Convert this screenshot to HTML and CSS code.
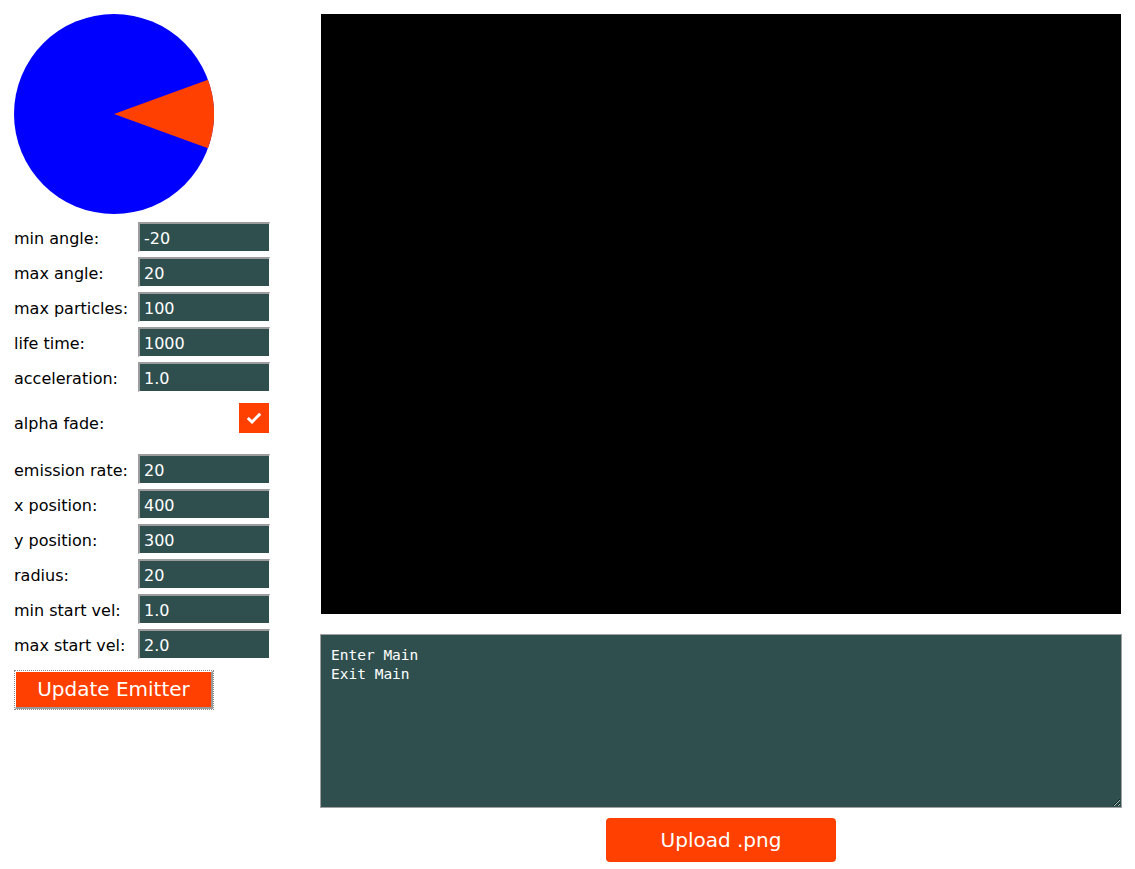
FILE: index.html
```html
<!DOCTYPE html>
<html>
<head>
<meta charset="utf-8">
<title>Particle Emitter</title>
<link rel="stylesheet" href="styles.css">
</head>
<body>
<div class="page">
  <div class="sidebar">
    <svg class="pie" width="200" height="200" viewBox="0 0 200 200">
      <circle cx="100" cy="100" r="100" fill="#0000ff"/>
      <path d="M100 100 L193.97 65.80 A100 100 0 0 1 193.97 134.20 Z" fill="#ff4000"/>
    </svg>
    <form class="form">
      <label class="lbl">min angle:</label><input class="field" type="text" value="-20">
      <label class="lbl">max angle:</label><input class="field" type="text" value="20">
      <label class="lbl">max particles:</label><input class="field" type="text" value="100">
      <label class="lbl">life time:</label><input class="field" type="text" value="1000">
      <label class="lbl">acceleration:</label><input class="field" type="text" value="1.0">
      <div class="check-row">
        <label class="lbl lbl-check">alpha fade:</label>
        <span class="checkbox">
          <svg width="16" height="12" viewBox="0 0 16 12"><polyline points="1.8,6 6,10 14.2,1.8" fill="none" stroke="#fff" stroke-width="3"/></svg>
        </span>
      </div>
      <label class="lbl">emission rate:</label><input class="field" type="text" value="20">
      <label class="lbl">x position:</label><input class="field" type="text" value="400">
      <label class="lbl">y position:</label><input class="field" type="text" value="300">
      <label class="lbl">radius:</label><input class="field" type="text" value="20">
      <label class="lbl">min start vel:</label><input class="field" type="text" value="1.0">
      <label class="lbl">max start vel:</label><input class="field" type="text" value="2.0">
    </form>
    <button class="update-btn" type="button">Update Emitter</button>
  </div>
  <div class="main">
    <div class="viewport"></div>
    <textarea class="console">Enter Main
Exit Main</textarea>
    <button class="upload-btn" type="button">Upload .png</button>
  </div>
</div>
</body>
</html>
```
FILE: styles.css
```css
html, body {
  margin: 0;
  padding: 0;
  background: #fff;
}
body {
  font-family: "DejaVu Sans", Verdana, sans-serif;
  font-size: 16px;
  color: #000;
}
.page {
  display: flex;
  padding: 14px 0 0 14px;
}
.sidebar {
  width: 256px;
  display: flex;
  flex-direction: column;
  align-items: flex-start;
}
.pie {
  display: block;
}
.form {
  margin-top: 8px;
  display: grid;
  grid-template-columns: 124px 132px;
  row-gap: 5px;
  align-items: center;
}
.lbl {
  font-size: 16px;
  line-height: 19px;
  white-space: nowrap;
  padding-top: 2px;
}
.field {
  box-sizing: border-box;
  width: 132px;
  height: 30px;
  margin: 0;
  padding: 1px 4px 0 4px;
  border-style: solid;
  border-width: 2px 1px 1px 2px;
  border-color: #9c9c9c #ffffff #ffffff #9c9c9c;
  background: #2f4f4f;
  color: #fff;
  font-family: "DejaVu Sans", Verdana, sans-serif;
  font-size: 16px;
  outline: none;
}
.check-row {
  grid-column: 1 / 3;
  display: flex;
  justify-content: space-between;
  align-items: flex-start;
  height: 30px;
  margin: 6px 0 16px 0;
  padding-right: 1px;
}
.lbl-check {
  padding-top: 11px;
}
.checkbox {
  width: 30px;
  height: 30px;
  background: #ff4000;
  display: flex;
  align-items: center;
  justify-content: center;
}
.checkbox svg {
  display: block;
}
.update-btn {
  margin: 12px 0 0 1px;
  box-sizing: border-box;
  width: 198px;
  height: 38px;
  padding: 0 0 1px 0;
  background: #ff4000;
  color: #fff;
  font-family: "DejaVu Sans", Verdana, sans-serif;
  font-size: 20px;
  border-style: solid;
  border-width: 1px 2px 2px 1px;
  border-color: #ffffff #9a9a9a #9a9a9a #ffffff;
  outline: 1px dotted #8a8a8a;
  outline-offset: 0;
  cursor: pointer;
}
.main {
  margin-left: 50px;
  width: 802px;
  display: flex;
  flex-direction: column;
  align-items: center;
}
.viewport {
  width: 800px;
  height: 600px;
  background: #000;
}
.console {
  box-sizing: border-box;
  display: block;
  width: 802px;
  height: 174px;
  margin: 20px 0 0 0;
  padding: 11px 10px;
  border: 1px solid #a0a0a0;
  background: #2f4f4f;
  color: #fff;
  font-family: "DejaVu Sans Mono", "Liberation Mono", monospace;
  font-size: 14.5px;
  line-height: 19px;
  outline: none;
}
.upload-btn {
  margin-top: 10px;
  width: 230px;
  height: 44px;
  border: none;
  border-radius: 4px;
  background: #ff4000;
  color: #fff;
  font-family: "DejaVu Sans", Verdana, sans-serif;
  font-size: 20px;
  padding: 0;
  cursor: pointer;
}
```
